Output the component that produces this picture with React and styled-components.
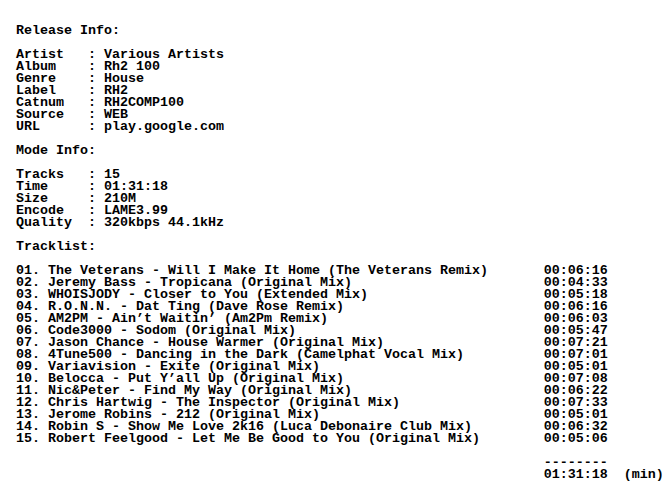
import React from "react";
import styled, { createGlobalStyle } from "styled-components";

const Global = createGlobalStyle`
	body {
		margin: 0;
		background: #fff;
	}
`;

const Page = styled.div`
	padding: 25px 16px 0;
	font-family: "Liberation Mono", "DejaVu Sans Mono", monospace;
	font-weight: bold;
	font-size: 13.3333px;
	line-height: 12px;
	color: #000;
	white-space: pre;
	display: flex;
	flex-flow: column nowrap;
	gap: 12px;
`;

const Section = styled.section`
	display: flex;
	flex-flow: column nowrap;
	gap: 12px;
`;

const Heading = styled.div`
	height: 12px;
`;

const List = styled.div`
	display: flex;
	flex-flow: column nowrap;
`;

const InfoRow = styled.div`
	display: grid;
	grid-template-columns: 9ch 2ch auto;
	height: 12px;
`;

const TrackRow = styled.div`
	display: grid;
	grid-template-columns: 4ch 62ch 8ch ${props => (props.unit ? "2ch auto" : "")};
	height: 12px;
`;

const release = [
	["Artist", "Various Artists"],
	["Album", "Rh2 100"],
	["Genre", "House"],
	["Label", "RH2"],
	["Catnum", "RH2COMP100"],
	["Source", "WEB"],
	["URL", "play.google.com"],
];

const mode = [
	["Tracks", "15"],
	["Time", "01:31:18"],
	["Size", "210M"],
	["Encode", "LAME3.99"],
	["Quality", "320kbps 44.1kHz"],
];

const tracks = [
	["The Veterans - Will I Make It Home (The Veterans Remix)", "00:06:16"],
	["Jeremy Bass - Tropicana (Original Mix)", "00:04:33"],
	["WHOISJODY - Closer to You (Extended Mix)", "00:05:18"],
	["R.O.N.N. - Dat Ting (Dave Rose Remix)", "00:06:16"],
	["AM2PM - Ain\u2019t Waitin\u2019 (Am2Pm Remix)", "00:06:03"],
	["Code3000 - Sodom (Original Mix)", "00:05:47"],
	["Jason Chance - House Warmer (Original Mix)", "00:07:21"],
	["4Tune500 - Dancing in the Dark (Camelphat Vocal Mix)", "00:07:01"],
	["Variavision - Exite (Original Mix)", "00:05:01"],
	["Belocca - Put Y\u2019all Up (Original Mix)", "00:07:08"],
	["Nic&Peter - Find My Way (Original Mix)", "00:06:22"],
	["Chris Hartwig - The Inspector (Original Mix)", "00:07:33"],
	["Jerome Robins - 212 (Original Mix)", "00:05:01"],
	["Robin S - Show Me Love 2k16 (Luca Debonaire Club Mix)", "00:06:32"],
	["Robert Feelgood - Let Me Be Good to You (Original Mix)", "00:05:06"],
];

const Info = ({ title, rows }) => (
	<Section>
		<Heading>{title}</Heading>
		<List>
			{rows.map(([key, value]) => (
				<InfoRow key={key}>
					<span>{key}</span>
					<span>:</span>
					<span>{value}</span>
				</InfoRow>
			))}
		</List>
	</Section>
);

const App = () => (
	<>
		<Global />
		<Page>
			<Info title="Release Info:" rows={release} />
			<Info title="Mode Info:" rows={mode} />
			<Section>
				<Heading>Tracklist:</Heading>
				<List>
					{tracks.map(([name, time], i) => (
						<TrackRow key={name}>
							<span>{String(i + 1).padStart(2, "0")}.</span>
							<span>{name}</span>
							<span>{time}</span>
						</TrackRow>
					))}
				</List>
				<List>
					<TrackRow>
						<span />
						<span />
						<span>--------</span>
					</TrackRow>
					<TrackRow unit>
						<span />
						<span />
						<span>01:31:18</span>
						<span />
						<span>(min)</span>
					</TrackRow>
				</List>
			</Section>
		</Page>
	</>
);

export default App;
